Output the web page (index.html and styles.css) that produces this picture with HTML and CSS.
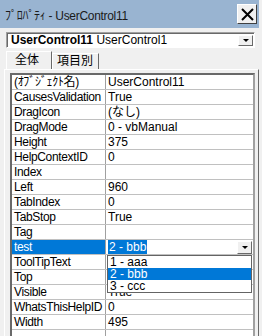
FILE: index.html
```html
<!DOCTYPE html>
<html lang="ja">
<head>
  <meta charset="UTF-8" />
  <title>プロパティ - UserControl11</title>
  <link rel="stylesheet" href="styles.css">
</head>
<body>
  <div class="titlebar">
    <span class="title">ﾌﾟﾛﾊﾟﾃｨ - UserControl11</span>
    <div class="close">
      <svg width="13" height="13" viewBox="0 0 13 13">
        <path d="M1 1 L12 12 M12 1 L1 12" stroke="#000" stroke-width="2" fill="none"/>
      </svg>
    </div>
  </div>

  <div class="objbox">
    <span class="obj-name">UserControl11</span> <span class="obj-type">UserControl1</span>
    <div class="drop-btn small"><span class="arrow"></span></div>
  </div>

  <div class="tabs">
    <div class="tab active">全体</div>
    <div class="tab">項目別</div>
  </div>

  <div class="panel">
    <div class="grid">
      <div class="row"><div class="name">(ｵﾌﾞｼﾞｪｸﾄ名)</div><div class="value">UserControl11</div></div>
      <div class="row"><div class="name">CausesValidation</div><div class="value">True</div></div>
      <div class="row"><div class="name">DragIcon</div><div class="value">(なし)</div></div>
      <div class="row"><div class="name">DragMode</div><div class="value">0 - vbManual</div></div>
      <div class="row"><div class="name">Height</div><div class="value">375</div></div>
      <div class="row"><div class="name">HelpContextID</div><div class="value">0</div></div>
      <div class="row"><div class="name">Index</div><div class="value"></div></div>
      <div class="row"><div class="name">Left</div><div class="value">960</div></div>
      <div class="row"><div class="name">TabIndex</div><div class="value">0</div></div>
      <div class="row"><div class="name">TabStop</div><div class="value">True</div></div>
      <div class="row"><div class="name">Tag</div><div class="value"></div></div>
      <div class="row selected">
        <div class="name">test</div>
        <div class="value"><span class="sel-text">2 - bbb</span><div class="drop-btn"><span class="arrow"></span></div></div>
      </div>
      <div class="row"><div class="name">ToolTipText</div><div class="value"></div></div>
      <div class="row"><div class="name">Top</div><div class="value"></div></div>
      <div class="row"><div class="name">Visible</div><div class="value">True</div></div>
      <div class="row"><div class="name">WhatsThisHelpID</div><div class="value">0</div></div>
      <div class="row"><div class="name">Width</div><div class="value">495</div></div>
      <div class="row"><div class="name"></div><div class="value"></div></div>
    </div>
  </div>

  <!-- open list of the test property -->
  <div class="droplist">
    <div class="item">1 - aaa</div>
    <div class="item current">2 - bbb</div>
    <div class="item">3 - ccc</div>
  </div>
</body>
</html>
```

FILE: styles.css
```css
html, body {
  margin: 0;
  padding: 0;
  width: 262px;
  height: 336px;
  overflow: hidden;
}

body {
  position: relative;
  background: #f0f0f0;
  font-family: "Liberation Sans", "Noto Sans CJK JP", sans-serif;
  font-size: 12px;
  color: #000;
}

.titlebar {
  height: 28px;
  margin-right: 3px;
  background: #99b4d1;
  display: flex;
  align-items: center;
  justify-content: space-between;
  padding-left: 5px;
  padding-right: 2px;
}

.title {
  font-size: 12px;
  letter-spacing: -0.3px;
  color: #1a1a1a;
}

.close {
  width: 18px;
  height: 18px;
  background: #f0f0f0;
  border: 1px solid;
  border-color: #fff #404040 #404040 #fff;
  display: flex;
  align-items: center;
  justify-content: center;
}

.objbox {
  position: relative;
  margin: 4px 7px 0 6px;
  height: 12px;
  padding: 1px 4px;
  background: #fff;
  border: 1px solid;
  border-color: #a0a0a0 #fff #fff #a0a0a0;
  box-shadow: inset 1px 1px 0 #696969;
  line-height: 12px;
  font-size: 12px;
  white-space: nowrap;
}

.obj-name {
  font-weight: bold;
}

.drop-btn {
  position: absolute;
  right: 1px;
  top: 1px;
  width: 13px;
  height: 11px;
  background: #f0f0f0;
  border: 1px solid;
  border-color: #fff #696969 #696969 #fff;
  display: flex;
  align-items: center;
  justify-content: center;
}

.drop-btn.small {
  top: 2px;
  height: 9px;
}

.arrow {
  width: 0;
  height: 0;
  border-left: 3px solid transparent;
  border-right: 3px solid transparent;
  border-top: 3px solid #000;
}

.tabs {
  display: flex;
  align-items: flex-end;
  height: 18px;
  margin-top: 3px;
  padding-left: 6px;
  position: relative;
  z-index: 1;
}

.tab {
  box-sizing: border-box;
  width: 47px;
  height: 16px;
  padding-left: 4px;
  border: 1px solid;
  border-color: #fff #696969 transparent #fff;
  border-bottom: none;
  line-height: 15px;
  font-size: 12px;
  background: #f0f0f0;
}

.tab.active {
  width: 46px;
  height: 18px;
  padding-left: 8px;
  line-height: 16px;
}

.panel {
  box-sizing: border-box;
  margin: 0 3px 0 4px;
  height: 268px;
  overflow: hidden;
  border: 1px solid;
  border-color: #fff #696969 #696969 #fff;
  border-bottom: none;
  padding: 3px 3px 0 5px;
}

.grid {
  border-top: 2px solid #696969;
  border-left: 2px solid #696969;
  border-right: 2px solid #a0a0a0;
  background: #fff;
}

.row {
  display: grid;
  grid-template-columns: 94px 1fr;
  height: 14px;
  border-bottom: 1px solid #c0c0c0;
  line-height: 14px;
}

.name {
  padding-left: 2px;
  border-right: 1px solid #a0a0a0;
  white-space: nowrap;
  overflow: hidden;
  letter-spacing: -0.35px;
}

.value {
  position: relative;
  padding-left: 2px;
  white-space: nowrap;
}

.row.selected .name {
  background: #0078d7;
  color: #fff;
}

.sel-text {
  background: #0078d7;
  color: #fff;
  padding: 0 1px;
}

.droplist {
  position: absolute;
  left: 107px;
  top: 255px;
  width: 143px;
  background: #fff;
  border: 1px solid #646464;
}

.item {
  height: 12px;
  line-height: 12px;
  padding-left: 2px;
  overflow: hidden;
}

.item.current {
  background: #0078d7;
  color: #fff;
}
```
